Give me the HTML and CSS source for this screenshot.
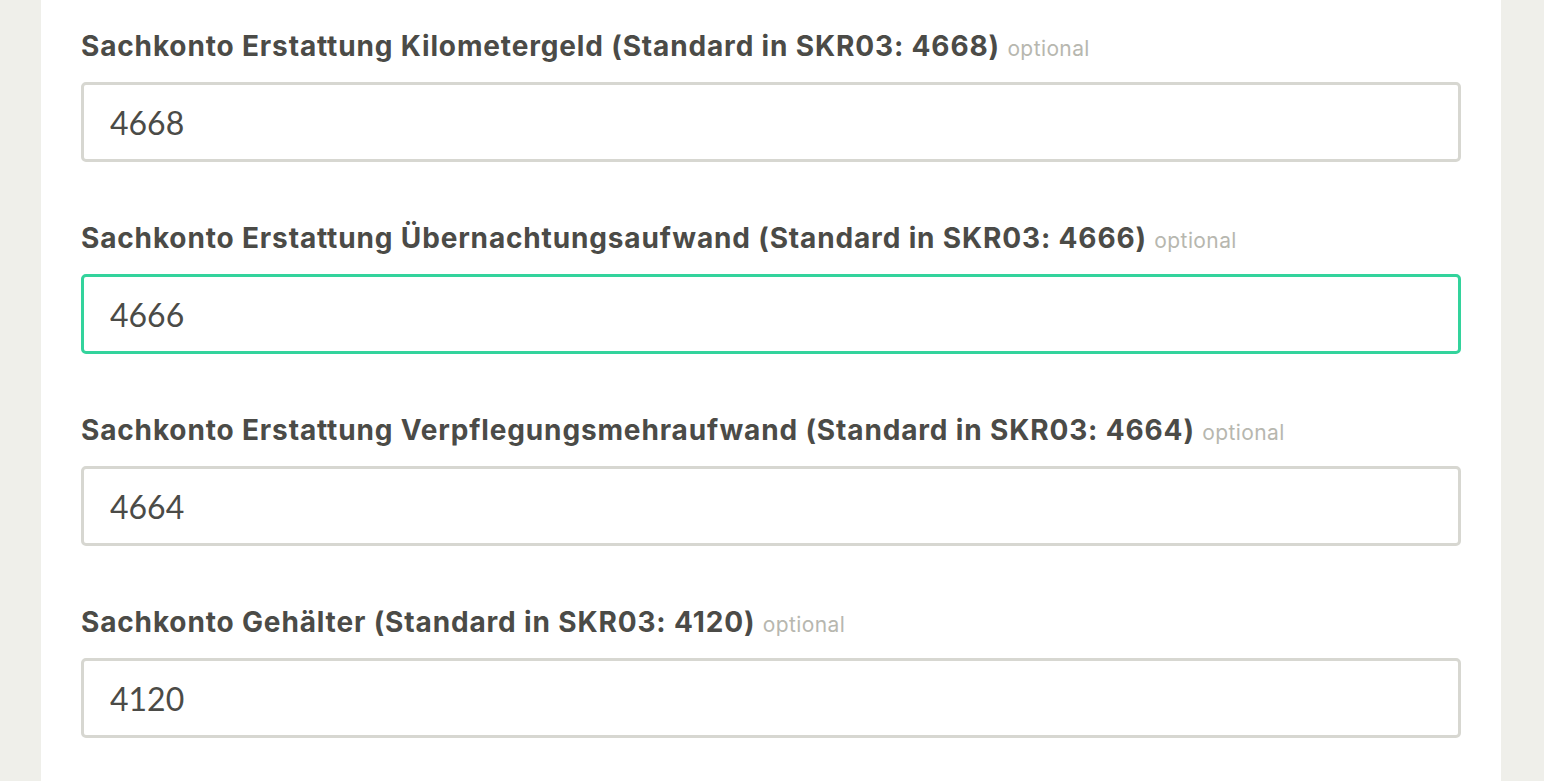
FILE: index.html
```html
<!DOCTYPE html>
<html lang="de">
<head>
<meta charset="utf-8">
<title>Sachkonten</title>
<link rel="stylesheet" href="styles.css">
</head>
<body>
<main class="panel">
  <div class="field">
    <label class="label" for="f1">Sachkonto Erstattung Kilometergeld (Standard in SKR03: 4668) <span class="optional">optional</span></label>
    <input class="input" id="f1" type="text" value="4668">
  </div>
  <div class="field">
    <label class="label" for="f2">Sachkonto Erstattung Übernachtungsaufwand (Standard in SKR03: 4666) <span class="optional">optional</span></label>
    <input class="input input-focus" id="f2" type="text" value="4666">
  </div>
  <div class="field">
    <label class="label" for="f3">Sachkonto Erstattung Verpflegungsmehraufwand (Standard in SKR03: 4664) <span class="optional">optional</span></label>
    <input class="input" id="f3" type="text" value="4664">
  </div>
  <div class="field">
    <label class="label" for="f4">Sachkonto Gehälter (Standard in SKR03: 4120) <span class="optional">optional</span></label>
    <input class="input" id="f4" type="text" value="4120">
  </div>
</main>
</body>
</html>
```
FILE: styles.css
```css
html, body {
  margin: 0;
  padding: 0;
  background: #efefea;
  height: 100%;
  overflow: hidden;
}
body {
  font-family: Inter, "Open Sans", "Liberation Sans", sans-serif;
  color: #4b4b47;
}
.panel {
  margin-left: 41px;
  width: 1460px;
  box-sizing: border-box;
  min-height: 100%;
  background: #ffffff;
  padding: 28px 40px 0 40px;
  display: flex;
  flex-direction: column;
  gap: 58px;
}
.field {
  display: flex;
  flex-direction: column;
  gap: 18px;
}
.label {
  display: block;
  height: 36px;
  line-height: 36px;
  font-family: Inter, "Open Sans", "Liberation Sans", sans-serif;
  font-size: 28px;
  font-weight: 700;
  letter-spacing: 0.85px;
  color: #4b4b47;
  white-space: nowrap;
}
.optional {
  font-family: Inter, "Open Sans", sans-serif;
  font-size: 21px;
  font-weight: 400;
  letter-spacing: 0.4px;
  color: #b7b7af;
}
.input {
  box-sizing: border-box;
  width: 1380px;
  height: 80px;
  border: 3px solid #d7d7d1;
  border-radius: 5px;
  padding: 0 26px;
  font-family: Lato, "Open Sans", "Liberation Sans", sans-serif;
  font-size: 32px;
  color: #4b4b47;
  background: #fff;
  outline: none;
}
.input-focus {
  border-color: #33d39c;
}
```
